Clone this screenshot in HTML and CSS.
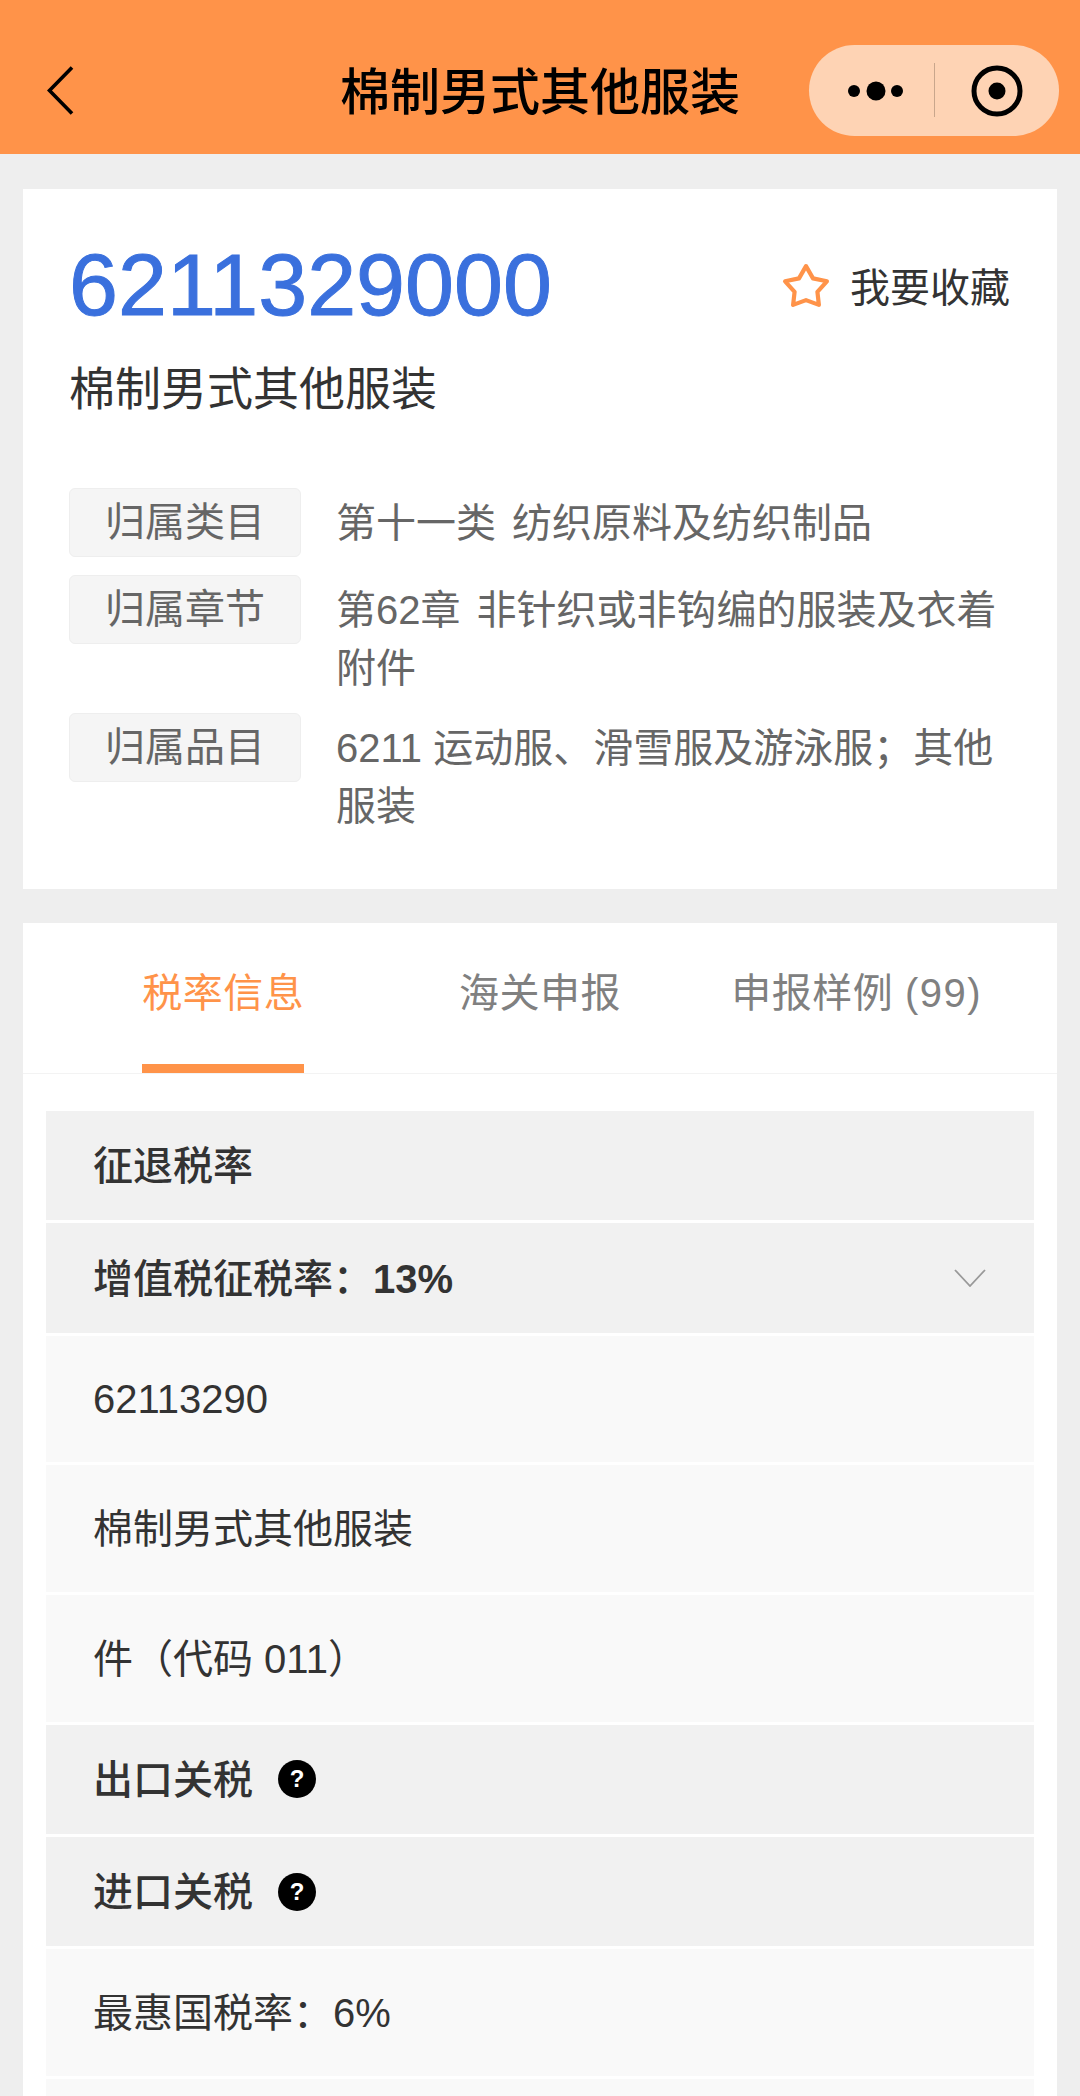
FILE: index.html
```html
<!DOCTYPE html>
<html lang="zh-CN">
<head>
<meta charset="utf-8">
<title>棉制男式其他服装</title>
<link rel="stylesheet" href="styles.css">
</head>
<body>
<header class="nav">
  <div class="nav-back">
    <svg class="back-icon" width="27" height="49" viewBox="0 0 27 49"><path d="M25 1.5 L2.5 24.5 L25 47.5" fill="none" stroke="#000" stroke-width="3.6"/></svg>
  </div>
  <div class="nav-title">棉制男式其他服装</div>
  <div class="nav-right">
    <div class="capsule">
      <svg class="capsule-icon" width="250" height="91" viewBox="0 0 250 91">
        <circle cx="45" cy="46" r="6"/><circle cx="67" cy="46" r="9.5"/><circle cx="88" cy="46" r="6"/>
        <rect x="125" y="18" width="1" height="54" fill="#c9a68c"/>
        <circle cx="188" cy="46" r="23" fill="none" stroke="#000" stroke-width="5"/>
        <circle cx="188" cy="46" r="8.5"/>
      </svg>
    </div>
  </div>
</header>

<main class="page">
  <section class="card summary">
    <div class="summary-head">
      <div class="code">6211329000</div>
      <div class="fav">
        <svg class="fav-icon" width="48" height="46" viewBox="0 0 48 46"><path d="M24 4.100 L31 16.400 L44.900 19.300 L35.400 29.800 L36.900 42.900 L24 38.100 L11.100 42.900 L12.600 29.800 L3.100 19.300 L17 16.400 Z" fill="none" stroke="#ff9349" stroke-width="4.200" stroke-linejoin="round"/></svg>
        <span class="fav-text">我要收藏</span>
      </div>
    </div>
    <div class="subtitle">棉制男式其他服装</div>
    <div class="meta">
      <div class="meta-row"><span class="tag">归属类目</span><span class="meta-text spaced">第十一类 纺织原料及纺织制品</span></div>
      <div class="meta-row"><span class="tag">归属章节</span><span class="meta-text spaced">第62章 非针织或非钩编的服装及衣着附件</span></div>
      <div class="meta-row"><span class="tag">归属品目</span><span class="meta-text">6211 运动服、滑雪服及游泳服；其他服装</span></div>
    </div>
  </section>

  <section class="card detail">
    <nav class="tabs">
      <div class="tab active"><span class="tab-label">税率信息</span></div>
      <div class="tab"><span class="tab-label">海关申报</span></div>
      <div class="tab"><span class="tab-label">申报样例 <span class="count">(99)</span></span></div>
    </nav>
    <div class="rows">
      <div class="row head"><span class="label">征退税率</span></div>
      <div class="row head between"><span class="label">增值税征税率：<b class="strong">13%</b></span>
        <svg class="chevron" width="32" height="18" viewBox="0 0 32 18"><path d="M1 1 L16 17 L31 1" fill="none" stroke="#999" stroke-width="1.800"/></svg>
      </div>
      <div class="row plain"><span>62113290</span></div>
      <div class="row plain"><span class="label">棉制男式其他服装</span></div>
      <div class="row plain"><span class="label">件（代码 011）</span></div>
      <div class="row head"><span class="label">出口关税</span><span class="help">?</span></div>
      <div class="row head"><span class="label">进口关税</span><span class="help">?</span></div>
      <div class="row plain"><span class="label">最惠国税率：6%</span></div>
      <div class="row plain"></div>
    </div>
  </section>
</main>
</body>
</html>
```
FILE: styles.css
```css
* { box-sizing: border-box; }
html, body {
  margin: 0;
  height: 2096px;
  overflow: hidden;
  background: #eeeeee;
  font-family: "Liberation Sans", "Noto Sans CJK SC", sans-serif;
  color: #333;
}
.nav {
  height: 154px;
  padding: 45px 21px 18px;
  background: #ff9349;
  display: grid;
  grid-template-columns: 1fr auto 1fr;
  align-items: center;
}
.nav-back { padding-left: 26px; }
.back-icon { display: block; }
.nav-title {
  padding-top: 5px;
  font-size: 50px;
  font-weight: 500;
  color: #000;
  line-height: 86px;
  white-space: nowrap;
}
.nav-right { display: flex; justify-content: flex-end; }
.capsule {
  width: 250px;
  height: 91px;
  border-radius: 46px;
  background: #fed3b4;
}
.capsule-icon { display: block; }
.page {
  padding: 35px 23px 0;
  display: flex;
  flex-direction: column;
  gap: 34px;
}
.card { background: #fff; }
.summary {
  height: 700px;
  padding: 46px 46px 0;
}
.summary-head {
  display: flex;
  justify-content: space-between;
  align-items: center;
  height: 100px;
}
.code {
  font-size: 88px;
  line-height: 100px;
  color: #3a70dd;
  -webkit-text-stroke: 1px #3a70dd;
}
.fav { display: flex; align-items: center; gap: 20px; padding: 6px 1px 0 0; }
.fav-icon { display: block; margin-top: -7px; }
.fav-text { font-size: 40px; line-height: 50px; color: #333; }
.subtitle {
  margin-top: 24px;
  font-size: 46px;
  line-height: 60px;
  color: #333;
}
.meta { margin-top: 69px; display: flex; flex-direction: column; }
.meta-row { display: flex; align-items: flex-start; gap: 35px; margin-bottom: 18px; }
.tag {
  flex: none;
  width: 232px;
  height: 69px;
  border: 1px solid #eeeeee;
  border-radius: 6px;
  background: #f5f5f5;
  color: #666;
  font-size: 40px;
  line-height: 67px;
  text-align: center;
}
.meta-text {
  flex: 1;
  padding-top: 6px;
  margin-bottom: -2px;
  font-size: 40px;
  line-height: 58px;
  color: #666;
}
.spaced { word-spacing: 5px; }
.detail { height: 1200px; }
.tabs {
  display: grid;
  grid-template-columns: repeat(3, 1fr);
  height: 151px;
  padding: 0 42px;
  border-bottom: 1px solid #f3f3f3;
}
.tab { display: flex; justify-content: center; }
.tab-label {
  height: 150px;
  font-size: 40px;
  line-height: 140px;
  color: #808080;
  letter-spacing: 0.5px;
  white-space: nowrap;
}
.count { letter-spacing: 1.500px; }
.tab.active .tab-label {
  color: #ff9349;
  border-bottom: 9px solid #ff9349;
}
.rows {
  padding: 37px 23px 0;
  display: flex;
  flex-direction: column;
  gap: 3px;
}
.row {
  display: flex;
  align-items: center;
  padding: 0 48px 0 47px;
  font-size: 40px;
  color: #333;
}
.label { padding-bottom: 5px; }
.strong { font-weight: 700; }
.head { height: 109.400px; background: #f1f1f1; font-weight: 500; gap: 25px; }
.between { justify-content: space-between; }
.plain { height: 126.600px; background: #f9f9f9; }
.chevron { display: block; }
.help {
  width: 38px;
  height: 38px;
  border-radius: 50%;
  background: #000;
  color: #fff;
  font-size: 24px;
  font-weight: 700;
  line-height: 38px;
  text-align: center;
}
```
